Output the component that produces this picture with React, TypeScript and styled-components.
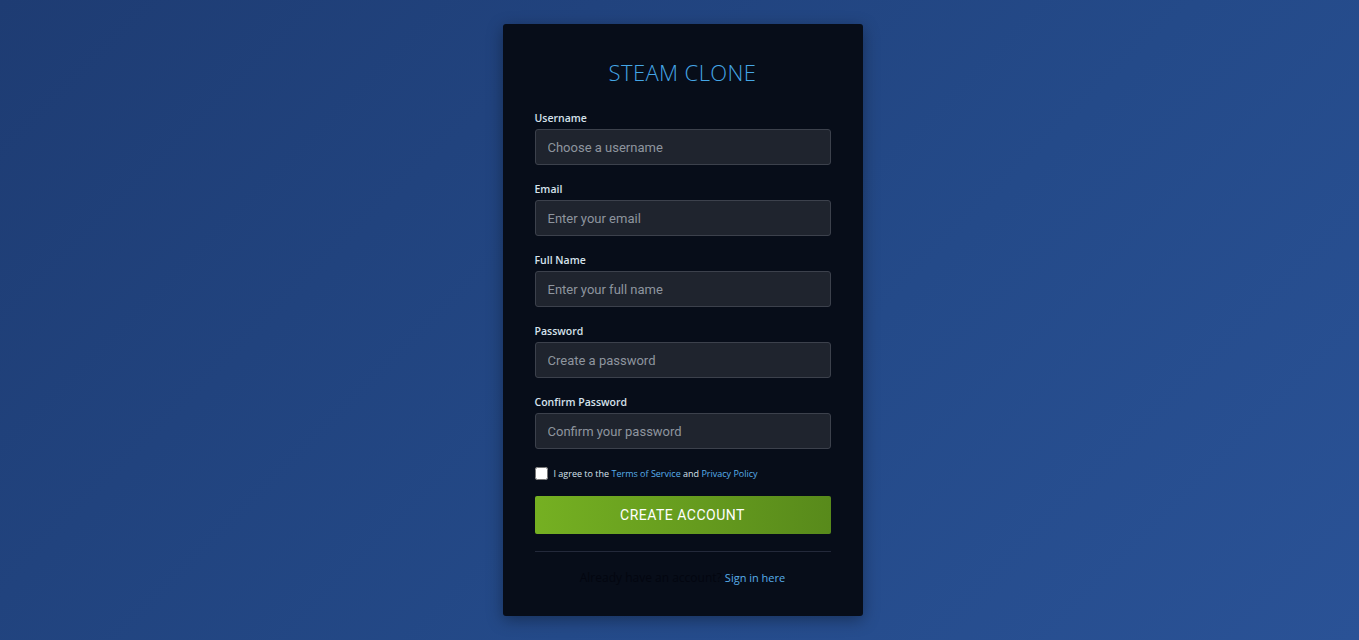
import styled, { createGlobalStyle } from 'styled-components'

const GlobalStyle = createGlobalStyle`
  html, body {
    margin: 0;
    padding: 0;
    height: 100%;
  }
  body {
    font-family: "Open Sans", "Noto Sans", sans-serif;
  }
  * { box-sizing: border-box; }
`

const Page = styled.div`
  min-height: 640px;
  width: 100%;
  display: flex;
  justify-content: center;
  align-items: flex-start;
  padding: 24px 0 0 6px;
  background: linear-gradient(135deg, #1e3c73 0%, #244a89 60%, #2a5296 100%);
`

const Card = styled.div`
  width: 360px;
  height: 592px;
  background: #070d19;
  border-radius: 3px;
  box-shadow: 0 4px 16px rgba(0, 0, 0, 0.35);
  padding: 30px 32px 0;
  display: flex;
  flex-direction: column;
`

const Title = styled.h1`
  margin: 0 0 21px;
  text-align: center;
  font-family: "Open Sans", sans-serif;
  font-weight: 300;
  font-size: 22px;
  line-height: 36px;
  letter-spacing: 0.4px;
  color: #45a6e6;
`

const Field = styled.div`
  display: flex;
  flex-direction: column;
  margin-bottom: 17px;
`

const Label = styled.label`
  font-family: "Open Sans", sans-serif;
  font-size: 10.5px;
  font-weight: 600;
  color: #d6e2ec;
  line-height: 14px;
  margin-bottom: 4px;
`

const Input = styled.input`
  height: 36px;
  width: 100%;
  background: #1f242e;
  border: 1px solid #3c414c;
  border-radius: 3px;
  padding: 0 12px;
  font-family: Roboto, "Liberation Sans", sans-serif;
  font-size: 13px;
  color: #c6d4df;
  outline: none;

  &::placeholder {
    color: #8e959e;
  }
`

const Agree = styled.label`
  display: flex;
  align-items: center;
  gap: 6px;
  margin-top: 1px;
  font-family: "Open Sans", sans-serif;
  font-size: 9px;
  color: #d6e2ec;
`

const Check = styled.input`
  margin: 0;
  width: 13px;
  height: 13px;
  accent-color: #ffffff;
`

const Link = styled.a<{ $size?: number }>`
  color: #58aeea;
  text-decoration: none;
  font-size: ${p => p.$size ?? 9}px;
`

const CreateButton = styled.button`
  margin-top: 16px;
  height: 38px;
  width: 100%;
  border: none;
  border-radius: 2px;
  background: linear-gradient(90deg, #75b022 0%, #588a1b 100%);
  color: #ffffff;
  font-family: Roboto, "Liberation Sans", sans-serif;
  font-size: 14px;
  font-weight: 400;
  letter-spacing: 0.5px;
  cursor: pointer;
`

const Divider = styled.hr`
  margin: 17px 0 0;
  border: none;
  border-top: 1px solid #23293a;
`

const Footer = styled.p`
  margin: 17px 0 0;
  text-align: center;
  font-family: "Open Sans", sans-serif;
  font-size: 12px;
  line-height: 18px;
  color: #030610;
`

const fields = [
  { label: 'Username', placeholder: 'Choose a username', type: 'text' },
  { label: 'Email', placeholder: 'Enter your email', type: 'email' },
  { label: 'Full Name', placeholder: 'Enter your full name', type: 'text' },
  { label: 'Password', placeholder: 'Create a password', type: 'password' },
  { label: 'Confirm Password', placeholder: 'Confirm your password', type: 'password' },
]

const App = () => {
  return (
    <>
      <GlobalStyle />
      <Page>
        <Card>
          <Title>STEAM CLONE</Title>
          {fields.map((f, key) => (
            <Field key={key}>
              <Label>{f.label}</Label>
              <Input type={f.type} placeholder={f.placeholder} />
            </Field>
          ))}
          <Agree>
            <Check type="checkbox" />
            <span>
              I agree to the <Link href="#">Terms of Service</Link> and{' '}
              <Link href="#">Privacy Policy</Link>
            </span>
          </Agree>
          <CreateButton>CREATE ACCOUNT</CreateButton>
          <Divider />
          <Footer>
            Already have an account? <Link href="#" $size={11}>Sign in here</Link>
          </Footer>
        </Card>
      </Page>
    </>
  )
}

export default App
